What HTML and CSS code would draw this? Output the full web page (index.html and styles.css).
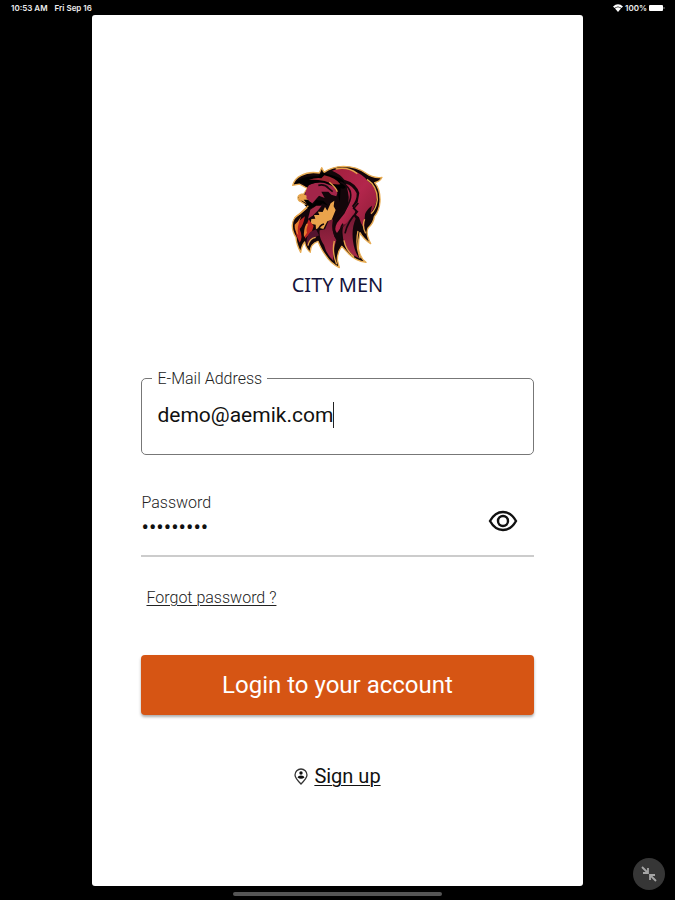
FILE: index.html
```html
<!DOCTYPE html>
<html lang="en">
<head>
<meta charset="utf-8">
<meta name="viewport" content="width=device-width, initial-scale=1">
<title>City Men</title>
<link rel="stylesheet" href="styles.css">
</head>
<body>
<header class="status">
  <div class="status-group"><span>10:53 AM</span><span>Fri Sep 16</span></div>
  <div class="status-group status-right">
    <svg width="10" height="8" viewBox="0 0 20 16" aria-hidden="true"><path fill="#fff" d="M0 5Q10-4 20 5L17 8Q10 2 3 8ZM4 9Q10 4 16 9L10 16Z"/></svg>
    <span>100%</span>
    <svg width="17" height="8" viewBox="0 0 17 8" aria-hidden="true"><rect x="0" y="1" width="14" height="6" rx="1" fill="#fff"/><path d="M15 3v2" stroke="#888"/></svg>
  </div>
</header>
<main class="card">
  <div class="brand">
    <svg class="lion" viewBox="6 5 285 330" role="img" aria-label="Lion">
      <defs>
        <linearGradient id="mane" x1="0" y1="0" x2="1" y2="1"><stop offset="0" stop-color="#a01f3d"/><stop offset=".5" stop-color="#b3264c"/><stop offset="1" stop-color="#8b1b35"/></linearGradient>
        <linearGradient id="lock" x1="0" y1="0" x2="0" y2="1"><stop offset="0" stop-color="#721832"/><stop offset="1" stop-color="#aa2949"/></linearGradient>
      </defs>
      <path class="outline" d="M14 75Q20 54 40 45Q62 33 94 38L101 22L108 36Q132 19 166 18Q206 18 234 39Q256 55 282 51Q276 64 260 67Q278 88 276 124Q274 151 259 169Q257 188 241 202Q231 217 248 250Q226 236 216 217Q211 240 211 264Q216 294 234 306Q202 302 181 279L161 258Q148 275 148 299L154 322Q127 308 113 285Q100 269 90 243Q66 251 67 276Q53 264 50 245Q41 256 38 276Q25 252 24 231Q12 212 13 194Q14 172 35 161L60 140L50 131L39 124Q29 121 30 110Q33 102 47 101L58 84L34 71Z"/>
      <path fill="url(#mane)" d="M132 31Q166 18 198 32Q226 43 239 62Q261 78 265 98Q272 126 247 160L252 136Q237 145 231 162Q228 187 229 206Q217 188 213 171L204 164L208 152L197 139L209 126L214 98Q205 68 169 58Q155 40 132 31Z"/>
      <path fill="url(#mane)" d="M174 70Q195 76 206 99Q207 119 192 137L202 153Q199 173 177 188Q160 198 147 218Q137 207 147 188L170 159Q188 127 180 95Z"/>
      <path fill="url(#lock)" d="M165 200L196 164L203 175Q190 204 195 242Q199 274 214 294Q182 281 171 255Q160 226 165 200ZM121 183L135 177Q128 211 145 240Q135 265 136 301Q114 280 108 254Q92 231 95 210L111 207Z"/>
      <path fill="#a32549" d="M63 74Q91 60 116 69Q143 76 148 98L145 108L130 103L121 94L100 94L110 113L93 106L73 129L51 116Q49 94 63 74Z"/>
      <path d="M18 70Q41 45 91 48L103 36Q125 43 148 50Q171 58 173 80Q169 88 158 83L155 126Q149 108 151 87Q133 75 107 67Q77 64 54 79L43 68Z"/>
      <path fill="#9d2531" d="M62 59Q84 51 100 54L109 45Q143 52 157 72Q134 74 110 62Q82 57 62 59Z"/>
      <path fill="#eaa34b" d="M32 106L47 101L56 106L55 114L67 124L60 131L42 121L34 122ZM128 129L139 121L137 138L143 149L131 178L118 183L106 206L93 202L84 207L83 193L68 190L70 176L82 175L78 164L94 164L90 154L104 155L111 140L118 151Z"/>
      <path d="M47 118L60 118L76 133L72 142L61 146L49 133L59 133ZM72 137L84 119L106 121L121 136L103 129L85 146L73 159L77 146Z"/>
      <path fill="#a32a46" d="M67 148L85 136L101 136L91 149L74 166L60 175Z"/>
      <path fill="#bd2422" d="M51 168Q45 198 35 206Q46 232 35 247L26 227Q20 207 25 189ZM62 177L77 197L72 213L51 235Q48 209 62 177Z"/>
      <path fill="#e77d31" d="M55 190Q46 207 48 231L57 217Q53 207 61 190ZM29 184L40 167Q24 204 31 225Q19 211 20 193Z"/>
      <path fill="#54142f" d="M84 207L93 225L79 232Q63 238 57 258Q51 232 67 215Z"/>
      <path class="gold" d="M143 26Q180 18 208 40M237 57Q269 78 268 119Q264 148 249 160M230 177Q221 197 233 219M210 212Q201 257 217 294M168 240Q173 270 198 289M139 242Q131 275 146 312M83 231Q64 234 60 256M61 136Q40 157 19 173M124 66Q142 80 148 94"/>
      <path class="dark" d="M157 65Q198 84 185 122Q174 154 146 171Q128 194 142 229M211 128L197 144L208 154Q179 183 171 219M165 190Q152 206 159 237M108 191Q95 194 90 211M91 75Q110 70 122 84L134 94"/>
    </svg>
    <h1 class="brand-name">CITY MEN</h1>
  </div>
  <form class="form">
    <fieldset class="email">
      <legend><label for="email">E-Mail Address</label></legend>
      <div class="email-row"><input id="email" type="email" value="demo@aemik.com"><span class="caret"></span></div>
    </fieldset>
    <div class="password">
      <div class="password-text">
        <label for="password">Password</label>
        <input id="password" type="password" value="citymen12">
      </div>
      <button class="eye" type="button" aria-label="Show password">
        <svg width="30" height="22" viewBox="0 0 30 22" fill="none" stroke="#111" stroke-width="2.400"><path d="M2 11Q7 2 15 2T28 11Q23 20 15 20T2 11Z"/><circle cx="15" cy="11" r="5"/></svg>
      </button>
    </div>
    <a class="forgot" href="#">Forgot password ?</a>
    <button class="login" type="submit">Login to your account</button>
  </form>
  <div class="signup">
    <svg width="14" height="17" viewBox="0 0 14 17" aria-hidden="true"><path d="M7 16Q1 10 1 7a6 6 0 0 1 12 0Q13 10 7 16Z" fill="none" stroke="#333" stroke-width="1.3"/><circle cx="7" cy="5" r="1.7" fill="#111"/><path d="M3.500 9.500Q4 7.500 7 7.500T10.500 9.500Q7 12 3.500 9.500Z" fill="#111"/></svg>
    <a href="#">Sign up</a>
  </div>
</main>
<div class="home-bar"></div>
<button class="shrink" type="button" aria-label="Exit full size">
  <svg width="16" height="16" viewBox="0 0 16 16" fill="none" stroke="#a5a5a5" stroke-width="1.800"><path d="M1 1l6 6M7 2v5H2M15 15L9 9M9 14V9h5"/></svg>
</button>
</body>
</html>
```
FILE: styles.css
```css
* { box-sizing: border-box; }
body {
  margin: 0;
  min-height: 100vh;
  display: flex;
  flex-direction: column;
  background: #000;
  color: #111;
  font-family: Roboto, "Liberation Sans", sans-serif;
}
button, input { font: inherit; color: inherit; border: 0; background: none; padding: 0; outline: 0; }
a { color: inherit; text-underline-offset: 2px; text-decoration-thickness: 1px; }
.status {
  display: flex;
  justify-content: space-between;
  height: 15px;
  padding: 3px 9px 0 11px;
  color: #eee;
  font-family: Inter, sans-serif;
  font-size: 8px;
  font-weight: 600;
  line-height: 10px;
}
.status-group { display: flex; gap: 7px; }
.status-right { gap: 2px; align-items: center; height: 10px; }
.card {
  flex: 1;
  width: 72.6%;
  margin: 0 auto;
  padding: 147px 49px 96px;
  background: #fff;
  border-radius: 3px;
}
.brand { display: flex; flex-direction: column; align-items: center; }
.lion { width: 95px; height: 110px; }
.outline { fill: #13060a; stroke: #e8ad55; stroke-width: 4; stroke-linejoin: round; }
.gold { fill: none; stroke: #e6a34b; stroke-width: 4; }
.dark { fill: none; stroke: #18070d; stroke-width: 5; }
.brand-name {
  margin: 0;
  color: #15143c;
  font-family: "Noto Sans", sans-serif;
  font-size: 20px;
  font-weight: 400;
  line-height: 26px;
}
.form { margin-top: 71px; display: flex; flex-direction: column; }
.email {
  min-width: 0;
  height: 86px;
  margin: 0;
  padding: 14px 10px 0;
  border: 1px solid #777;
  border-radius: 5px;
}
.email legend {
  padding: 0 5px;
  color: #222;
  font-size: 16px;
  font-weight: 300;
  line-height: 19px;
}
.email-row { display: flex; align-items: center; padding-left: 5px; }
.email input { field-sizing: content; font-size: 21px; line-height: 26px; height: 26px; }
.caret { width: 1px; height: 26px; background: #222; }
.password {
  display: flex;
  align-items: center;
  justify-content: space-between;
  height: 64px;
  margin-top: 38px;
  padding-right: 16px;
  border-bottom: 2px solid #ccc;
}
.password-text { display: flex; flex-direction: column; flex: 1; align-self: flex-start; }
.password label { color: #222; font-size: 16px; font-weight: 300; line-height: 20px; }
.password input { width: 100%; height: 28px; font-size: 22px; }
.eye { display: flex; margin-bottom: 6px; }
.forgot { align-self: flex-start; margin: 31px 0 0 5px; color: #222; font-size: 16px; font-weight: 300; line-height: 20px; }
.login {
  height: 60px;
  margin-top: 47px;
  border-radius: 4px;
  background: #d65514;
  color: #fff;
  font-size: 24px;
  box-shadow: 0 2px 3px #0005;
}
.signup {
  display: flex;
  justify-content: center;
  align-items: center;
  gap: 6px;
  margin-top: 49px;
  font-size: 20px;
  line-height: 24px;
}
.home-bar { width: 31%; height: 4px; margin: 6px auto 4px; border-radius: 2px; background: #555; }
.shrink {
  position: fixed;
  right: 10px;
  bottom: 10px;
  display: flex;
  align-items: center;
  justify-content: center;
  width: 32px;
  height: 32px;
  border-radius: 50%;
  background: #363636;
}
```
